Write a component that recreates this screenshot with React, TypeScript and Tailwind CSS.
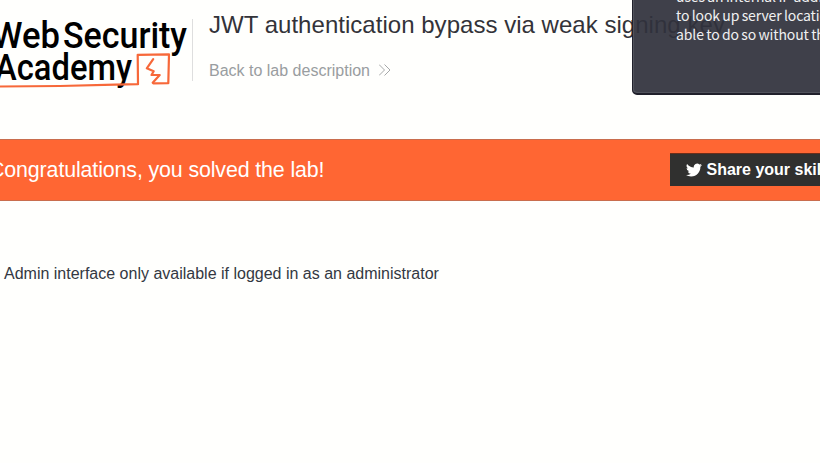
function AcademyLogo() {
  return (
    <svg className="block h-[100px] w-[192px] shrink-0" viewBox="0 0 192 100" fill="none" aria-label="Web Security Academy">
      <g fill="#000" fontFamily="Roboto, sans-serif" fontWeight="500" fontSize="37.5">
        <text x="-8" y="48" textLength="68" lengthAdjust="spacingAndGlyphs">Web</text>
        <text x="63" y="48" textLength="124" lengthAdjust="spacingAndGlyphs">Security</text>
        <text x="-5" y="80" textLength="137" lengthAdjust="spacingAndGlyphs">Academy</text>
      </g>
      <g stroke="#f76839" strokeLinecap="round" strokeLinejoin="round">
        <path d="M0 86.5 60 86 115 84.6 138 84.2 137.7 54.8 169 54.3 168.3 83.2 153.5 83.4" strokeWidth="2.2" />
        <path d="M153.2 59.2 146.8 68.3 153.7 71.2 151.5 75 159.7 75 152.7 82.8" strokeWidth="2.2" />
      </g>
    </svg>
  );
}

function DoubleChevron() {
  return (
    <svg className="ml-[9px] h-3 w-3 -translate-y-px" viewBox="0 0 12 12" fill="none" stroke="#a6a8a9">
      <path d="M0 .5 5.5 6 0 11.5M5.5 .5 11 6 5.5 11.5" />
    </svg>
  );
}

function TwitterBird() {
  return (
    <svg className="h-4 w-4" viewBox="0 0 24 24" fill="#fff">
      <path d="M23.95 4.57a10 10 0 0 1-2.82.77 4.96 4.96 0 0 0 2.16-2.72c-.95.55-2 .95-3.13 1.18a4.92 4.92 0 0 0-8.38 4.48A13.93 13.93 0 0 1 1.64 3.16a4.92 4.92 0 0 0 1.52 6.57 4.9 4.9 0 0 1-2.23-.61v.06a4.92 4.92 0 0 0 3.95 4.83 5 5 0 0 1-2.21.08 4.94 4.94 0 0 0 4.6 3.42A9.87 9.87 0 0 1 0 19.54a14 14 0 0 0 7.55 2.21c9.05 0 14-7.5 14-13.98 0-.21 0-.42-.02-.63a9.94 9.94 0 0 0 2.42-2.57z" />
    </svg>
  );
}

export default function App() {
  return (
    <div className="relative h-[463px] w-[820px] overflow-hidden bg-[#fffffd] font-['Liberation_Sans',Arial,sans-serif] text-[#333332]">
      <header className="flex h-[139px]">
        <AcademyLogo />
        <div className="mt-[19px] h-[62px] w-px shrink-0 bg-[#dedede]" />
        <div className="pl-4">
          <h1 className="mt-[9px] h-8 text-2xl leading-8 tracking-[0.03px] whitespace-nowrap text-[#333339]">
            JWT authentication bypass via weak signing key
          </h1>
          <a className="mt-[18px] flex h-6 items-center text-base whitespace-nowrap text-[#999da0]">
            Back to lab description
            <DoubleChevron />
          </a>
        </div>
      </header>

      <section className="flex h-[62px] items-start justify-between border-y border-[#c96d4d] bg-[#ff6633]">
        <p className="-ml-[11px] pt-[14px] text-[21.4px] leading-8 tracking-[-0.13px] whitespace-nowrap text-white">Congratulations, you solved the lab!</p>
        <button className="mt-[13px] flex h-[33px] w-[150px] items-center gap-[4.5px] overflow-hidden border-t border-[#6b2d19] bg-[#30302f] pl-4 text-base font-bold whitespace-nowrap text-white">
          <span className="shrink-0"><TwitterBird /></span>
          Share your skills!
        </button>
      </section>

      <main className="mt-[61px] pl-1">
        <p className="text-base leading-6 whitespace-nowrap text-[#333842]">
          Admin interface only available if logged in as an administrator
        </p>
      </main>

      <aside className="absolute -top-2 left-[632px] h-[103px] w-[200px] rounded-[5px] border border-b-2 border-[#20202b] bg-[#30323c]/93 pl-[43px] font-['Noto_Sans_CJK_SC',sans-serif] text-[14px] leading-[19px] tracking-[-0.12px] [word-spacing:-0.6px] whitespace-nowrap text-[#f0f0f1] shadow-[inset_1px_-1px_0_#51535c]">
        <p className="-mt-[6px]">uses an internal IP address</p>
        <p>to look up server location</p>
        <p>able to do so without the</p>
      </aside>
    </div>
  );
}
